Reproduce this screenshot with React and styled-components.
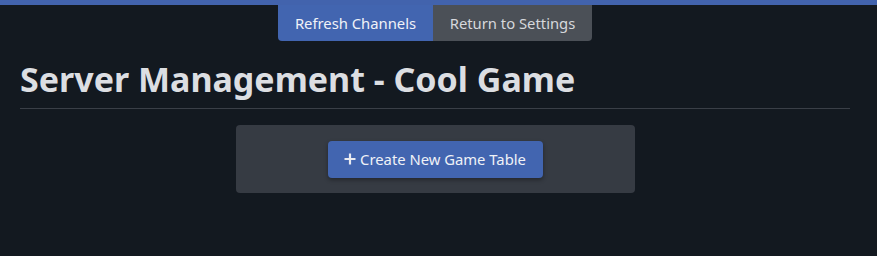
import React from "react";
import styled, { createGlobalStyle } from "styled-components";

const Global = createGlobalStyle`
  html, body { margin: 0; padding: 0; background: #131920; }
  body { font-family: "Noto Sans", "Open Sans", sans-serif; color: #dcdee2; }
`;

const TopBar = styled.div`
  height: 5px;
  background: #4263ad;
`;

const Page = styled.div`
  padding: 0 27px 0 20px;
`;

const ButtonGroup = styled.div`
  display: flex;
  justify-content: center;
`;

const GroupButton = styled.button`
  height: 36px;
  border: none;
  margin: 0;
  padding: 0;
  font-family: inherit;
  font-size: 14.8px;
  color: ${(p) => (p.$primary ? "#f0f2f7" : "#d6d8dc")};
  background: ${(p) => (p.$primary ? "#4265b0" : "#4b5057")};
  border-radius: ${(p) => (p.$first ? "0 0 0 4px" : "0 0 4px 0")};
  width: ${(p) => p.$w}px;
`;

const Title = styled.h1`
  margin: 18px 0 0;
  font-size: 34px;
  font-weight: 700;
  line-height: 40px;
  color: #dcdee2;
  padding-bottom: 9px;
  border-bottom: 1px solid #3a3f47;
`;

const Card = styled.div`
  width: 399px;
  height: 68px;
  margin: 16px auto 0;
  background: #363b43;
  border-radius: 4px;
  display: flex;
  align-items: center;
  justify-content: center;
`;

const PrimaryButton = styled.button`
  width: 215px;
  height: 37px;
  border: none;
  border-radius: 4px;
  background: #4265b0;
  color: #f0f2f7;
  font-family: inherit;
  font-size: 14.8px;
  display: flex;
  align-items: center;
  justify-content: center;
  gap: 4px;
  box-shadow: 0 2px 4px rgba(0, 0, 0, 0.35);
  padding: 0;
`;

const Plus = () => (
  <svg width="12" height="12" viewBox="0 0 12 12">
    <path d="M6 0.5v11M0.5 6h11" stroke="#e8eaf0" strokeWidth="2.2" />
  </svg>
);

export default function App() {
  return (
    <>
      <Global />
      <TopBar />
      <Page>
        <ButtonGroup>
          <GroupButton $primary $first $w={155}>Refresh Channels</GroupButton>
          <GroupButton $w={159}>Return to Settings</GroupButton>
        </ButtonGroup>
        <Title>Server Management - Cool Game</Title>
        <Card>
          <PrimaryButton>
            <Plus />
            Create New Game Table
          </PrimaryButton>
        </Card>
      </Page>
    </>
  );
}
